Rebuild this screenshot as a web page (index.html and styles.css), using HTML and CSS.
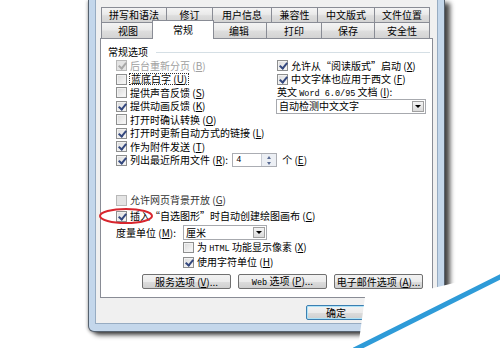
FILE: index.html
```html
<!DOCTYPE html>
<html lang="zh-CN">
<head>
    <meta charset="UTF-8">
    <title>选项</title>
    <link rel="stylesheet" href="styles.css">
</head>
<body>
<div class="screen">
    <div class="dialog">
        <div class="inner">
            <div class="tabs">
                <div class="tabrow first">
                    <div class="tab">拼写和语法</div>
                    <div class="tab">修订</div>
                    <div class="tab">用户信息</div>
                    <div class="tab">兼容性</div>
                    <div class="tab">中文版式</div>
                    <div class="tab">文件位置</div>
                </div>
                <div class="tabrow second">
                    <div class="tab">视图</div>
                    <div class="tab on">常规</div>
                    <div class="tab">编辑</div>
                    <div class="tab">打印</div>
                    <div class="tab">保存</div>
                    <div class="tab">安全性</div>
                </div>
            </div>
            <div class="page">
                <div class="group"><span>常规选项</span><div class="rule"></div></div>
                <div class="opts">
                    <div class="chk dis"><span class="cb on"></span><span>后台重新分页 (<u>B</u>)</span></div>
                    <div class="chk"><span class="cb on"></span><span>允许从“阅读版式”启动 (<u>X</u>)</span></div>
                    <div class="chk"><span class="cb"></span><span class="focus">蓝底白字 (<u>U</u>)</span></div>
                    <div class="chk"><span class="cb on"></span><span>中文字体也应用于西文 (<u>F</u>)</span></div>
                    <div class="chk"><span class="cb"></span><span>提供声音反馈 (<u>S</u>)</span></div>
                    <div class="chk"><span class="lbl-mix">英文 <span class="lat">Word 6.0/95</span> 文档 (<u>I</u>):</span></div>
                    <div class="chk"><span class="cb on"></span><span>提供动画反馈 (<u>K</u>)</span></div>
                    <div class="combo wide-combo"><span class="txt">自动检测中文文字</span><span class="arrow"></span></div>
                    <div class="chk wide"><span class="cb"></span><span>打开时确认转换 (<u>O</u>)</span></div>
                    <div class="chk wide"><span class="cb on"></span><span>打开时更新自动方式的链接 (<u>L</u>)</span></div>
                    <div class="chk wide"><span class="cb on"></span><span>作为附件发送 (<u>T</u>)</span></div>
                    <div class="chk wide"><span class="cb on"></span><span>列出最近所用文件 (<u>R</u>):</span>
                        <div class="spin"><span class="val lat">4</span><span class="btns"><span class="up"></span><span class="down"></span></span></div>
                        <span class="unit">个 (<u>E</u>)</span>
                    </div>
                </div>
                <div class="opts2">
                    <div class="chk half"><span class="cb"></span><span>允许网页背景开放 (<u>G</u>)</span></div>
                    <div class="chk"><span class="cb on"></span><span>插入“自选图形”时自动创建绘图画布 (<u>C</u>)</span></div>
                    <div class="measure"><span class="lbl">度量单位 (<u>M</u>):</span><div class="combo small-combo"><span class="txt">厘米</span><span class="arrow"></span></div></div>
                    <div class="chk sub"><span class="cb"></span><span>为 <span class="lat">HTML</span> 功能显示像素 (<u>X</u>)</span></div>
                    <div class="chk sub"><span class="cb on"></span><span>使用字符单位 (<u>H</u>)</span></div>
                </div>
                <div class="btnrow">
                    <button class="btn"><span>服务选项 (<u>V</u>)...</span></button>
                    <button class="btn"><span><span class="lat">Web</span> 选项 (<u>P</u>)...</span></button>
                    <button class="btn"><span>电子邮件选项 (<u>A</u>)...</span></button>
                </div>
            </div>
            <div class="foot">
                <button class="btn default">确定</button>
                <button class="btn">取消</button>
            </div>
        </div>
    </div>
    <svg class="overlay" width="500" height="348" viewBox="0 0 500 348">
        <ellipse cx="126" cy="216" rx="26" ry="7" fill="none" stroke="#d8262e" stroke-width="2"/>
        <polygon points="365,297 400,296 450,284 500,271 500,348 358,348" fill="#fff"/>
        <line x1="354" y1="350" x2="504" y2="275" stroke="#2e9bd8" stroke-width="5"/>
    </svg>
</div>
</body>
</html>
```

FILE: styles.css
```css
body{
    margin: 0;
    background: #fff;
    font-family: "Noto Sans CJK SC", "Liberation Sans", sans-serif;
    font-size: 10px;
    line-height: 12px;
    color: #000;
}
.screen{
    position: relative;
    width: 500px;
    height: 348px;
    overflow: hidden;
}
.dialog{
    margin-left: 88px;
    width: 357px;
    box-sizing: border-box;
    background: #c4d7eb;
    border: 1px solid #56626f;
    border-top: 0;
    border-radius: 0 0 6px 6px;
    padding: 0 6px 7px;
    box-shadow: 5px 3px 5px rgba(0, 0, 0, 0.72), -1px 1px 3px rgba(0, 0, 0, 0.25);
}
.inner{
    background: #f0f0f0;
    border: 1px solid #97acc2;
    border-top: 0;
    padding: 7px 4px 0;
}
.lat{
    font-family: "Liberation Mono", monospace;
    font-size: 8.5px;
}
.lbl-mix{
    line-height: 11px;
}

/* tabs */
.tabrow{
    display: grid;
    margin-left: 1px;
    width: 329px;
}
.tabrow.first{
    grid-template-columns: 66px 46px 59px 46px 57px 55px;
    height: 15px;
}
.tabrow.second{
    grid-template-columns: 54px 57px 55px 55px 53px 55px;
    height: 16px;
}
.tab{
    border: 1px solid #898c95;
    border-bottom: 0;
    margin-left: -1px;
    background: linear-gradient(#f4f4f4, #eaeaea 45%, #dddddd 55%, #d3d3d3);
    display: flex;
    align-items: center;
    justify-content: center;
}
.tab:first-child{
    margin-left: 0;
}
.tab.on{
    background: #fff;
    margin: -2px -2px -1px -3px;
    position: relative;
    z-index: 1;
}

/* page */
.page{
    height: 260px;
    box-sizing: border-box;
    border: 1px solid #898c95;
    background: #fff;
    padding-top: 7px;
}
.group{
    display: flex;
    align-items: center;
    height: 12px;
    margin: 0 2px 0 7px;
}
.group .rule{
    flex: 1;
    border-top: 1px solid #d5dfe5;
    margin-left: 8px;
}
.opts{
    display: grid;
    grid-template-columns: 161px 1fr;
    grid-auto-rows: 13.5px;
    margin-top: 1px;
    padding-left: 15px;
}
.opts .wide{
    grid-column: 1 / -1;
}
.chk{
    display: flex;
    align-items: center;
    white-space: nowrap;
}
.cb{
    width: 11px;
    height: 11px;
    box-sizing: border-box;
    border: 1px solid #8e8f8f;
    background: linear-gradient(135deg, #d9d9d9, #fbfbfb);
    box-shadow: inset 0 0 0 1px #f2f2f2;
    position: relative;
    flex: none;
    margin-right: 3px;
}
.cb.on::after{
    content: "";
    position: absolute;
    left: 3px;
    top: 0;
    width: 3px;
    height: 6px;
    border: solid #34487e;
    border-width: 0 2px 2px 0;
    transform: rotate(40deg);
}
.dis{
    color: #a0a0a0;
}
.dis .cb, .half .cb{
    border-color: #b8b8b8;
    background: #e4e4e4;
    box-shadow: none;
}
.dis .cb.on::after{
    border-color: #a8a8a8;
}
.half{
    color: #333;
}
.focus{
    border: 1px dotted #333;
    padding: 0 1px;
    margin-left: -1px;
    line-height: 10px;
}

/* combos */
.combo{
    display: flex;
    align-items: center;
    height: 15px;
    box-sizing: border-box;
    border: 1px solid #a7a9ae;
    background: #fff;
    padding-left: 2px;
    align-self: center;
}
.combo .txt{
    flex: 1;
}
.combo .arrow{
    width: 12px;
    height: 11px;
    box-sizing: border-box;
    border: 1px solid #a0a0a0;
    background: linear-gradient(#f4f4f4, #dadada);
    margin-right: 1px;
    display: flex;
    align-items: center;
    justify-content: center;
}
.combo .arrow::after{
    content: "";
    border: 3px solid transparent;
    border-top: 3px solid #000;
    border-bottom: 0;
}
.wide-combo{
    width: 150px;
    margin-left: -1px;
}
.small-combo{
    width: 84px;
}

/* spinner */
.spin{
    display: flex;
    width: 45px;
    height: 14px;
    box-sizing: border-box;
    border: 1px solid #abadb3;
    background: #fff;
    margin-left: 4px;
}
.spin .val{
    flex: 1;
    padding-left: 3px;
    line-height: 12px;
}
.spin .btns{
    width: 14px;
    display: grid;
    grid-template-rows: 1fr 1fr;
    border-left: 1px solid #c8ccd4;
    background: #eceff4;
}
.spin .up, .spin .down{
    display: flex;
    align-items: center;
    justify-content: center;
}
.spin .up::after{
    content: "";
    border: 2.5px solid transparent;
    border-bottom: 3px solid #5a6c94;
    border-top: 0;
}
.spin .down::after{
    content: "";
    border: 2.5px solid transparent;
    border-top: 3px solid #5a6c94;
    border-bottom: 0;
}
.unit{
    margin-left: 5px;
}

/* lower section */
.opts2{
    display: grid;
    grid-template-rows: 14px 18px 15px 15px 14px;
    margin-top: 26px;
    padding-left: 15px;
}
.measure{
    display: flex;
    align-items: center;
    white-space: nowrap;
}
.measure .lbl{
    width: 67px;
}
.sub{
    padding-left: 67px;
}

/* buttons */
.btn{
    height: 15px;
    box-sizing: border-box;
    border: 1px solid #707070;
    border-radius: 2px;
    background: linear-gradient(#f2f2f2, #ebebeb 50%, #dddddd 51%, #cfcfcf);
    display: flex;
    align-items: center;
    justify-content: center;
    font: inherit;
    color: #000;
    padding: 0;
    white-space: nowrap;
}
.btnrow{
    display: flex;
    gap: 7px;
    margin: 5px 0 0 41px;
}
.btnrow .btn{
    width: 89px;
}
.foot{
    height: 25px;
    box-sizing: border-box;
    padding-top: 7px;
    display: flex;
    justify-content: flex-end;
    gap: 7px;
}
.foot .btn{
    width: 60px;
}
.btn.default{
    border-color: #3c7fb1;
    box-shadow: inset 0 0 0 1px #aee3f8;
}
.overlay{
    position: absolute;
    left: 0;
    top: 0;
    pointer-events: none;
}
```
